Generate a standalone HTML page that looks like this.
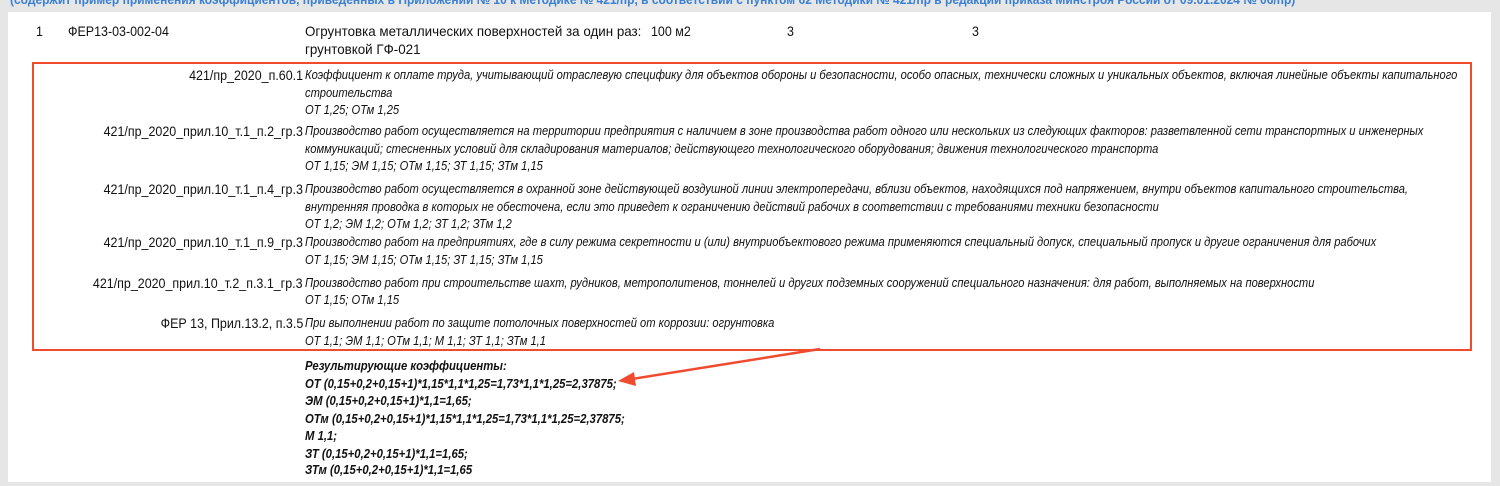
<!DOCTYPE html>
<html><head><meta charset="utf-8"><style>
html,body{margin:0;padding:0}
body{width:1500px;height:486px;background:#e6e6e6;position:relative;overflow:hidden;font-family:"Liberation Sans",Arial,sans-serif;color:#111}
#panel{position:absolute;left:8px;top:12px;width:1483px;height:470px;background:#fff}
.t{position:absolute;white-space:nowrap;font-size:14px;line-height:18px;transform:scaleX(0.89);transform-origin:left center}
.r{transform-origin:right center;text-align:right}
.i{font-style:italic;font-size:12.5px;transform:scaleX(0.893)}
.b{font-weight:bold;transform:scaleX(0.905)}
#box{position:absolute;left:32px;top:62px;width:1436px;height:285px;border:2px solid #f04a2f}
.blue{color:#3b80d2;font-weight:bold;font-size:12.5px;transform:scaleX(0.96)}
.d{transform:scaleX(0.955)}
</style></head><body>
<div id="panel"></div>
<div class="t blue" style="left:10px;top:-9px">(содержит пример применения коэффициентов, приведенных в Приложении № 10 к Методике № 421/пр, в соответствии с пунктом 62 Методики № 421/пр в редакции приказа Минстроя России от 09.01.2024 № 06/пр)</div>

<div class="t" style="left:36px;top:22px">1</div>
<div class="t" style="left:68px;top:22px">ФЕР13-03-002-04</div>
<div class="t d" style="left:305px;top:22px">Огрунтовка металлических поверхностей за один раз:</div>
<div class="t d" style="left:305px;top:40px">грунтовкой ГФ-021</div>
<div class="t" style="left:651px;top:22px">100 м2</div>
<div class="t" style="left:787px;top:22px">3</div>
<div class="t" style="left:972px;top:22px">3</div>

<div id="box"></div>

<div class="t r" style="right:1197px;top:66px">421/пр_2020_п.60.1</div>
<div class="t i" style="left:305px;top:66px">Коэффициент к оплате труда, учитывающий отраслевую специфику для объектов обороны и безопасности, особо опасных, технически сложных и уникальных объектов, включая линейные объекты капитального</div>
<div class="t i" style="left:305px;top:84px">строительства</div>
<div class="t i" style="left:305px;top:101px">ОТ 1,25; ОТм 1,25</div>

<div class="t r" style="right:1197px;top:122px">421/пр_2020_прил.10_т.1_п.2_гр.3</div>
<div class="t i" style="left:305px;top:122px">Производство работ осуществляется на территории предприятия с наличием в зоне производства работ одного или нескольких из следующих факторов: разветвленной сети транспортных и инженерных</div>
<div class="t i" style="left:305px;top:140px">коммуникаций; стесненных условий для складирования материалов; действующего технологического оборудования; движения технологического транспорта</div>
<div class="t i" style="left:305px;top:157px">ОТ 1,15; ЭМ 1,15; ОТм 1,15; ЗТ 1,15; ЗТм 1,15</div>

<div class="t r" style="right:1197px;top:180px">421/пр_2020_прил.10_т.1_п.4_гр.3</div>
<div class="t i" style="left:305px;top:180px">Производство работ осуществляется в охранной зоне действующей воздушной линии электропередачи, вблизи объектов, находящихся под напряжением, внутри объектов капитального строительства,</div>
<div class="t i" style="left:305px;top:198px">внутренняя проводка в которых не обесточена, если это приведет к ограничению действий рабочих в соответствии с требованиями техники безопасности</div>
<div class="t i" style="left:305px;top:215px">ОТ 1,2; ЭМ 1,2; ОТм 1,2; ЗТ 1,2; ЗТм 1,2</div>

<div class="t r" style="right:1197px;top:233px">421/пр_2020_прил.10_т.1_п.9_гр.3</div>
<div class="t i" style="left:305px;top:233px">Производство работ на предприятиях, где в силу режима секретности и (или) внутриобъектового режима применяются специальный допуск, специальный пропуск и другие ограничения для рабочих</div>
<div class="t i" style="left:305px;top:251px">ОТ 1,15; ЭМ 1,15; ОТм 1,15; ЗТ 1,15; ЗТм 1,15</div>

<div class="t r" style="right:1197px;top:274px">421/пр_2020_прил.10_т.2_п.3.1_гр.3</div>
<div class="t i" style="left:305px;top:274px">Производство работ при строительстве шахт, рудников, метрополитенов, тоннелей и других подземных сооружений специального назначения: для работ, выполняемых на поверхности</div>
<div class="t i" style="left:305px;top:291px">ОТ 1,15; ОТм 1,15</div>

<div class="t r" style="right:1197px;top:314px">ФЕР 13, Прил.13.2, п.3.5</div>
<div class="t i" style="left:305px;top:314px">При выполнении работ по защите потолочных поверхностей от коррозии: огрунтовка</div>
<div class="t i" style="left:305px;top:332px">ОТ 1,1; ЭМ 1,1; ОТм 1,1; М 1,1; ЗТ 1,1; ЗТм 1,1</div>

<div class="t i b" style="left:305px;top:357px">Результирующие коэффициенты:</div>
<div class="t i b" style="left:305px;top:375px">ОТ (0,15+0,2+0,15+1)*1,15*1,1*1,25=1,73*1,1*1,25=2,37875;</div>
<div class="t i b" style="left:305px;top:392px">ЭМ (0,15+0,2+0,15+1)*1,1=1,65;</div>
<div class="t i b" style="left:305px;top:410px">ОТм (0,15+0,2+0,15+1)*1,15*1,1*1,25=1,73*1,1*1,25=2,37875;</div>
<div class="t i b" style="left:305px;top:427px">М 1,1;</div>
<div class="t i b" style="left:305px;top:445px">ЗТ (0,15+0,2+0,15+1)*1,1=1,65;</div>
<div class="t i b" style="left:305px;top:461px">ЗТм (0,15+0,2+0,15+1)*1,1=1,65</div>

<svg style="position:absolute;left:0;top:0" width="1500" height="486">
<line x1="820" y1="349" x2="632" y2="379" stroke="#f04a2f" stroke-width="2.5"/>
<polygon points="618,381 634,372 636,386" fill="#f04a2f"/>
</svg>
</body></html>
